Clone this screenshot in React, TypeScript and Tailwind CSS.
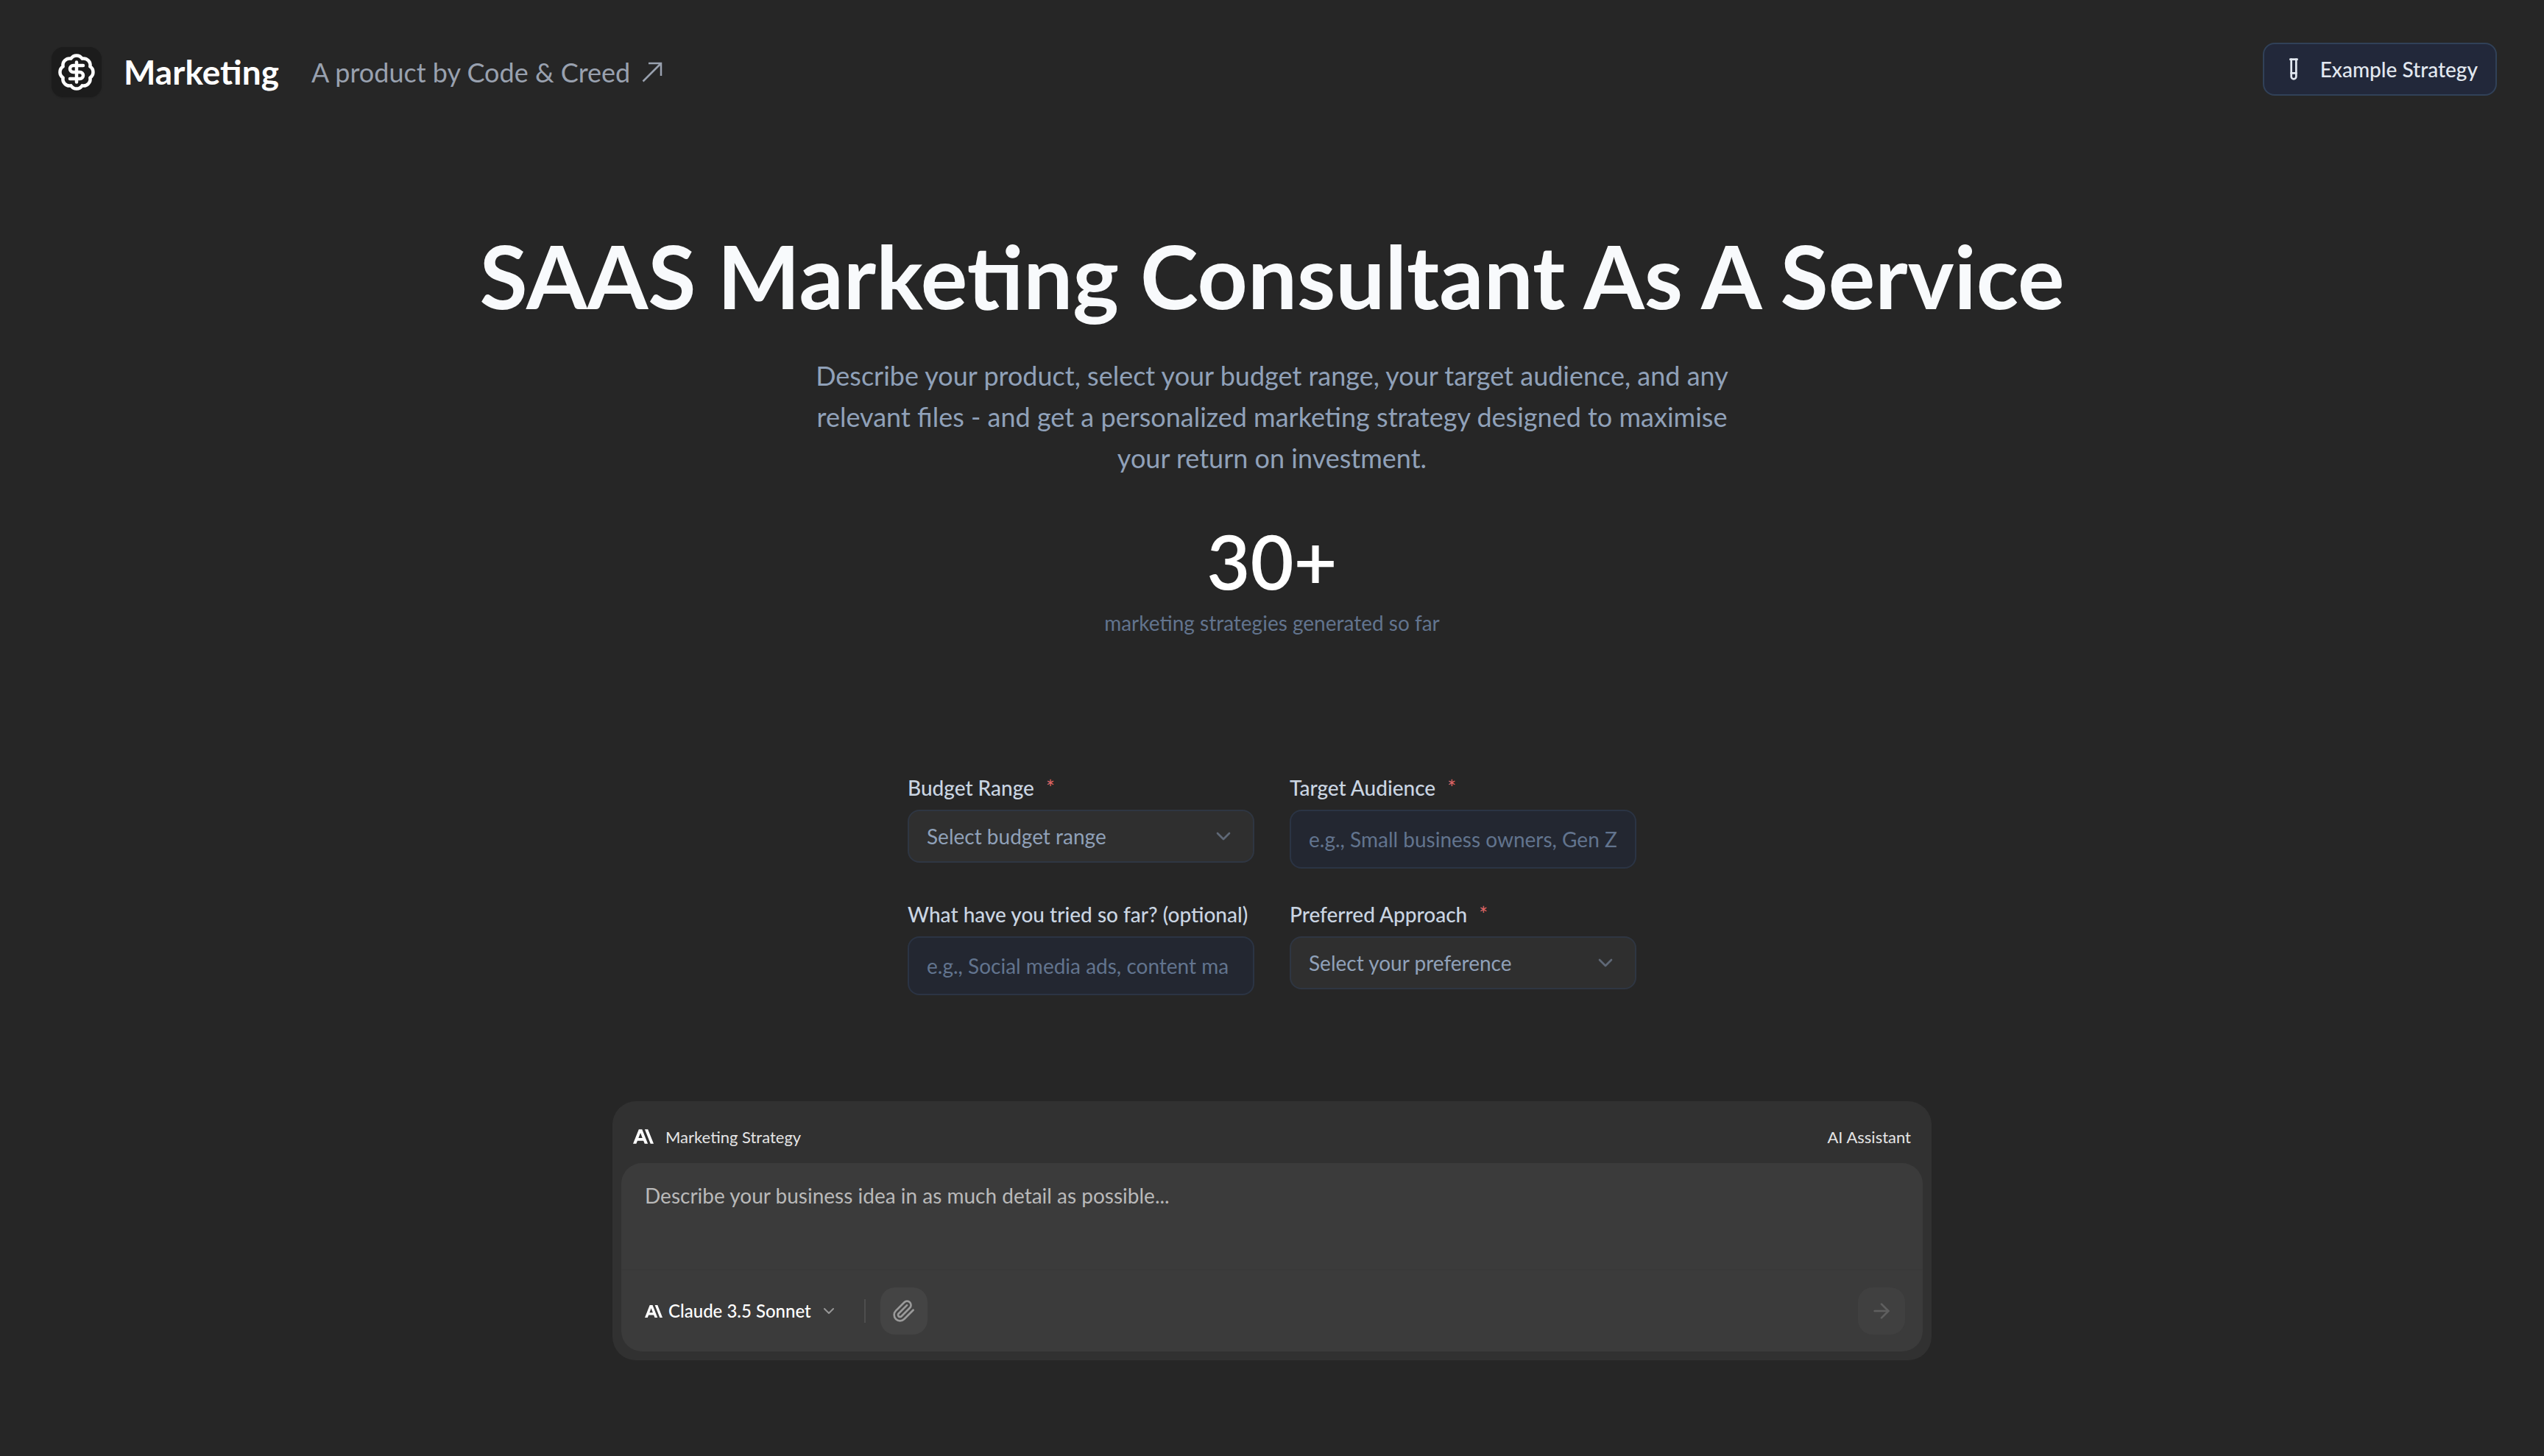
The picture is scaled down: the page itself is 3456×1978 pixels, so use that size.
import type { ReactNode } from "react";
import { ArrowRight, BadgeDollarSign, ChevronDown, TestTube } from "lucide-react";

function AnthropicMark({ className }: { className: string }) {
  return (
    <svg viewBox="0 3.5 24 17" fill="currentColor" aria-hidden="true" className={className}>
      <path d="M17.3041 3.541h-3.6718l6.696 16.918H24Zm-10.6082 0L0 20.459h3.7442l1.3693-3.5527h7.0052l1.3693 3.5528h3.7442L10.5363 3.5409Zm-.3712 10.2232 2.2914-5.9456 2.2914 5.9456Z" />
    </svg>
  );
}

function Field({ id, label, required, children }: { id: string; label: string; required?: boolean; children: ReactNode }) {
  return (
    <div className="flex min-w-0 flex-col gap-4">
      <label htmlFor={id} className="flex gap-4 text-[28px] leading-7 font-medium whitespace-nowrap text-slate-300">
        {label}
        {required && <span className="font-normal text-[#e06666]">*</span>}
      </label>
      {children}
    </div>
  );
}

function TextField({ id, placeholder }: { id: string; placeholder: string }) {
  return (
    <input
      id={id}
      type="text"
      placeholder={placeholder}
      className="h-20 w-full rounded-2xl border-2 border-[#2b3444] bg-[#232731] px-6 text-[28px] text-slate-200 outline-none placeholder:text-slate-500"
    />
  );
}

function SelectField({ id, placeholder, options }: { id: string; placeholder: string; options: string[] }) {
  return (
    <div className="relative">
      <select
        id={id}
        defaultValue=""
        className="h-18 w-full appearance-none rounded-2xl border-2 border-[#2f3642] bg-[#2f2f2f] px-6 text-[28px] text-slate-400 outline-none"
      >
        <option value="" disabled>
          {placeholder}
        </option>
        {options.map((option) => (
          <option key={option}>{option}</option>
        ))}
      </select>
      <ChevronDown className="pointer-events-none absolute inset-y-0 right-[26px] my-auto size-8 text-[#5f6876]" />
    </div>
  );
}

export default function App() {
  return (
    <div className="flex min-h-screen flex-col bg-neutral-800 font-['Lato',sans-serif] antialiased">
      <header className="flex items-start justify-between px-16 pt-[58px]">
        <div className="flex items-center gap-11 p-1.5">
          <a href="#" className="flex items-center gap-[30px]">
            <span className="flex size-17 items-center justify-center rounded-2xl bg-[#1c1c1c] text-white shadow-sm">
              <BadgeDollarSign className="size-[54px]" />
            </span>
            <span className="text-[46px] leading-none font-bold text-white">Marketing</span>
          </a>
          <a href="#" className="flex items-center gap-4 text-[36px] leading-none text-gray-400">
            A product by Code &amp; Creed
            <svg viewBox="0 0 28 28" fill="none" stroke="currentColor" strokeWidth="2.5" aria-hidden="true" className="size-7">
              <path d="M1.5 26.5 26 2M9 2h17v17" />
            </svg>
          </a>
        </div>
        <button
          type="button"
          className="flex h-18 items-center gap-5 rounded-2xl border-2 border-slate-700 bg-[#22283a] px-6 text-[28px] font-medium text-slate-200"
        >
          <TestTube className="size-8" />
          Example Strategy
        </button>
      </header>

      <main className="flex flex-col items-center px-16 pt-44">
        <section className="flex flex-col items-center text-center">
          <h1 className="text-[119px] leading-[120px] font-bold text-slate-50">
            SAAS Marketing Consultant As A Service
          </h1>
          <p className="mt-12 max-w-[1280px] text-[36px] leading-14 text-slate-400">
            Describe your product, select your budget range, your target audience, and any relevant files - and get a
            personalized marketing strategy designed to maximise your return on investment.
          </p>
          <p className="mt-16 text-[102px] leading-24 font-semibold text-white">30+</p>
          <p className="mt-4 text-[28px] leading-10 text-slate-500">marketing strategies generated so far</p>
        </section>

        <form className="mt-[190px] grid w-full max-w-[990px] grid-cols-2 items-start gap-12">
          <Field id="budget" label="Budget Range" required>
            <SelectField
              id="budget"
              placeholder="Select budget range"
              options={["Under $1,000", "$1,000 - $5,000", "$5,000 - $10,000", "Over $10,000"]}
            />
          </Field>
          <Field id="audience" label="Target Audience" required>
            <TextField id="audience" placeholder="e.g., Small business owners, Gen Z" />
          </Field>
          <Field id="tried" label="What have you tried so far? (optional)">
            <TextField id="tried" placeholder="e.g., Social media ads, content ma" />
          </Field>
          <Field id="approach" label="Preferred Approach" required>
            <SelectField id="approach" placeholder="Select your preference" options={["Organic", "Paid", "Mixed"]} />
          </Field>
        </form>

        <section className="mt-36 w-full max-w-[1792px] rounded-[32px] bg-[#313131] p-3">
          <div className="flex h-18 items-center justify-between px-4 text-[22px] text-neutral-200">
            <div className="flex items-center gap-4">
              <AnthropicMark className="h-5 w-7 text-white" />
              <h2>Marketing Strategy</h2>
            </div>
            <p>AI Assistant</p>
          </div>
          <div className="overflow-hidden rounded-[28px] bg-[#3b3b3b]">
            <textarea
              aria-label="Business idea"
              placeholder="Describe your business idea in as much detail as possible..."
              className="block h-36 w-full resize-none px-8 py-6 text-[28px] leading-10 text-white outline-none placeholder:text-[#b9b9b9]"
            />
            <div className="flex h-28 items-center justify-between border-t-2 border-[#393939] pr-6 pl-8">
              <div className="flex items-center gap-5">
                <button type="button" className="flex items-center gap-2 pr-4 text-[24px] font-medium text-white">
                  <AnthropicMark className="h-[17px] w-6" />
                  Claude 3.5 Sonnet
                  <ChevronDown className="ml-1 size-6 text-[#969696]" />
                </button>
                <span className="h-8 w-0.5 bg-[#4e4e4e]" />
                <button
                  type="button"
                  aria-label="Attach file"
                  className="flex size-16 items-center justify-center rounded-[20px] bg-[#444444] text-[#9a9a9a]"
                >
                  <svg
                    viewBox="0 0 24 24"
                    fill="none"
                    stroke="currentColor"
                    strokeWidth="2"
                    strokeLinecap="round"
                    strokeLinejoin="round"
                    aria-hidden="true"
                    className="size-8"
                  >
                    <path d="m21.44 11.05-9.19 9.19a6 6 0 0 1-8.49-8.49l8.57-8.57A4 4 0 1 1 18 8.84l-8.59 8.57a2 2 0 0 1-2.83-2.83l8.49-8.48" />
                  </svg>
                </button>
              </div>
              <button
                type="button"
                aria-label="Send"
                className="flex size-16 items-center justify-center rounded-[20px] bg-[#404040] text-[#5f5f5f]"
              >
                <ArrowRight className="size-8" />
              </button>
            </div>
          </div>
        </section>
      </main>
    </div>
  );
}
